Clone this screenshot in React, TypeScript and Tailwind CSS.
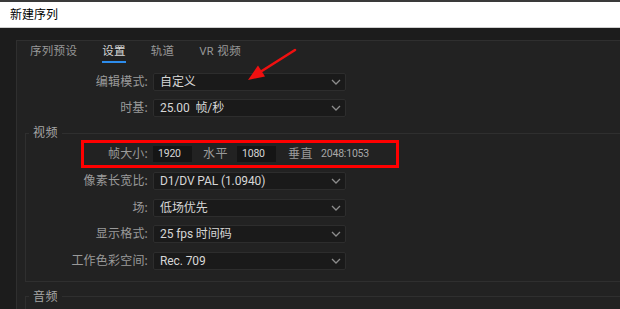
import type { ReactNode } from 'react';

const tabs = ['序列预设', '设置', '轨道', 'VR 视频'];

function Chevron() {
  return (
    <svg width="10" height="6" viewBox="0 0 10 6" fill="none">
      <path d="M1 1l4 4 4-4" stroke="#8c8c8c" strokeWidth="1.3" />
    </svg>
  );
}

function Select({ value }: { value: string }) {
  return (
    <div className="flex h-[18px] w-[193px] shrink-0 items-center justify-between rounded-[2px] border border-[#2d2d2d] bg-[#1a1a1a] pl-[6px] pr-[4px] font-['Roboto','Noto_Sans_CJK_SC',sans-serif] text-[12px] leading-none tracking-[-0.1px] text-[#d6d6d6]">
      <span className="whitespace-pre">{value}</span>
      <Chevron />
    </div>
  );
}

function Row({ label, labelW, children }: { label: string; labelW: string; children: ReactNode }) {
  return (
    <div className="flex shrink-0 items-center gap-[5px]">
      <span className={`${labelW} text-right text-[12px] leading-none tracking-[0.2px] text-[#9a9a9a]`}>{label}</span>
      {children}
    </div>
  );
}

function NumBox({ value }: { value: string }) {
  return (
    <div className="flex h-[16px] w-[39px] items-center bg-[#151515] pl-[5px] font-['Roboto',sans-serif] text-[10.5px] leading-none tracking-[-0.2px] text-[#d6d6d6]">
      {value}
    </div>
  );
}

export default function App() {
  return (
    <div className="relative flex h-[309px] w-[620px] flex-col overflow-hidden bg-[#1c1c1c] font-['Noto_Sans','Noto_Sans_CJK_SC',sans-serif]">
      <div className="h-[2px] shrink-0 bg-[#3a3a3a]" />
      <div className="flex h-[26px] shrink-0 items-center border-b border-[#cfcfcf] bg-white pl-[10px] text-[12px] text-black">
        新建序列
      </div>

      <div className="flex min-h-0 flex-1 pt-[12px]">
        <div className="ml-[16px] flex flex-1 flex-col border-l border-t border-[#2f2f2f] bg-[#222222]">
          {/* tabs */}
          <div className="flex shrink-0 gap-[25px] pl-[13px] pt-[2px]">
            {tabs.map((t, i) => (
              <div key={t} className="flex flex-col">
                <span className={`text-[11.5px] leading-[16px] tracking-[0.3px] ${i === 1 ? 'text-[#d8d8d8]' : 'text-[#989898]'}`}>
                  {t}
                </span>
                <div className={`mt-[2px] h-[2px] ${i === 1 ? 'bg-[#2d8ceb]' : 'bg-transparent'}`} />
              </div>
            ))}
          </div>

          <div className="mt-[10px] flex shrink-0 flex-col gap-[8px]">
            <Row label="编辑模式:" labelW="w-[131px]">
              <Select value="自定义" />
            </Row>
            <Row label="时基:" labelW="w-[131px]">
              <Select value="25.00  帧/秒" />
            </Row>
          </div>

          {/* 视频 */}
          <fieldset className="ml-[8px] mt-[9px] shrink-0 border-y border-l border-[#2f2f2f] pb-[11px]">
            <legend className="ml-[3px] px-[4px] text-[12px] leading-[14px] tracking-[0.5px] text-[#a6a6a6]">视频</legend>
            <div className="ml-[55px] flex h-[28px] w-[318px] items-center border-[3px] border-[#ff0000]">
              <span className="w-[64px] text-right text-[12px] leading-none tracking-[0.2px] text-[#9a9a9a]">帧大小:</span>
              <div className="ml-[5px]">
                <NumBox value="1920" />
              </div>
              <span className="ml-[11px] text-[12px] leading-none tracking-[0.5px] text-[#9a9a9a]">水平</span>
              <div className="ml-[9px]">
                <NumBox value="1080" />
              </div>
              <span className="ml-[12px] text-[12px] leading-none tracking-[0.5px] text-[#9a9a9a]">垂直</span>
              <span className="ml-[8px] font-['Roboto',sans-serif] text-[10.5px] leading-none tracking-[-0.2px] text-[#a8a8a8]">2048:1053</span>
            </div>

            <div className="mt-[4px] flex flex-col gap-[8.5px]">
              <Row label="像素长宽比:" labelW="w-[122px]">
                <Select value="D1/DV PAL (1.0940)" />
              </Row>
              <Row label="场:" labelW="w-[122px]">
                <Select value="低场优先" />
              </Row>
              <Row label="显示格式:" labelW="w-[122px]">
                <Select value="25 fps 时间码" />
              </Row>
              <Row label="工作色彩空间:" labelW="w-[122px]">
                <Select value="Rec. 709" />
              </Row>
            </div>
          </fieldset>

          {/* 音频 */}
          <fieldset className="ml-[8px] mt-[8px] h-[40px] shrink-0 border-l border-t border-[#2f2f2f]">
            <legend className="ml-[3px] px-[4px] text-[12px] leading-[14px] tracking-[0.5px] text-[#a6a6a6]">音频</legend>
          </fieldset>
        </div>
      </div>

      {/* annotation arrow */}
      <svg className="pointer-events-none absolute left-0 top-0" width="620" height="309" viewBox="0 0 620 309">
        <line x1="295" y1="50" x2="261" y2="71.5" stroke="#f01010" strokeWidth="2.6" strokeLinecap="round" />
        <polygon points="248,80 265,76.5 258,65.5" fill="#f01010" />
      </svg>
    </div>
  );
}
